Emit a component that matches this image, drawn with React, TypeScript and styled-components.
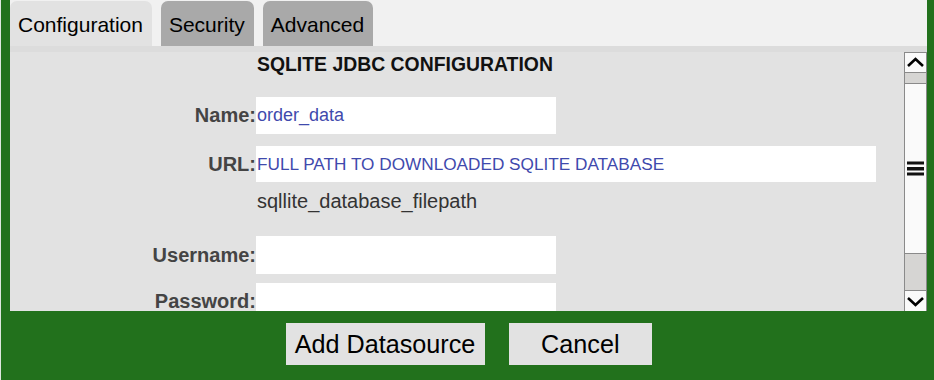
import React from 'react'
import styled, { createGlobalStyle } from 'styled-components'

const GlobalStyle = createGlobalStyle`
  html, body {
    margin: 0;
    padding: 0;
    background: #22711c;
  }
  body {
    font-family: "Liberation Sans", Arial, Helvetica, sans-serif;
  }
`

const tabs = ['Configuration', 'Security', 'Advanced']

function ChevronIcon({ down }: { down?: boolean }) {
  return (
    <svg width="19" height="11" viewBox="0 0 19 11">
      <polyline
        points={down ? '2,2 9.5,9 17,2' : '2,9 9.5,2 17,9'}
        fill="none"
        stroke="#000"
        strokeWidth="2.6"
      />
    </svg>
  )
}

function GripIcon() {
  return (
    <svg width="17" height="15" viewBox="0 0 17 15">
      <rect x="0" y="0.5" width="17" height="3" fill="#111" />
      <rect x="0" y="6" width="17" height="3.5" fill="#111" />
      <rect x="0" y="11.5" width="17" height="3" fill="#111" />
    </svg>
  )
}

export default function App() {
  return (
    <>
      <GlobalStyle />
      <Frame>
        <TabBar>
          {tabs.map((t, i) => (
            <Tab key={t} $active={i === 0}>
              {t}
            </Tab>
          ))}
        </TabBar>
        <Band />
        <Body>
          <Content>
            <Title>SQLITE JDBC CONFIGURATION</Title>
            <Row $h={37} $mt={22}>
              <Label>Name:</Label>
              <Field $w={300} readOnly defaultValue="order_data" />
            </Row>
            <Row $h={36} $mt={12}>
              <Label>URL:</Label>
              <Field
                $w={620}
                $size={17.2}
                readOnly
                defaultValue="FULL PATH TO DOWNLOADED SQLITE DATABASE"
              />
            </Row>
            <Row $h={23} $mt={8}>
              <span />
              <Hint>sqllite_database_filepath</Hint>
            </Row>
            <Row $h={38} $mt={23}>
              <Label>Username:</Label>
              <Field $w={300} readOnly defaultValue="" />
            </Row>
            <Row $h={37} $mt={9}>
              <Label>Password:</Label>
              <Field $w={300} type="password" readOnly defaultValue="" />
            </Row>
          </Content>
          <ScrollBar>
            <ArrowButton>
              <ChevronIcon />
            </ArrowButton>
            <Track>
              <Thumb>
                <GripIcon />
              </Thumb>
            </Track>
            <ArrowButton $bottom>
              <ChevronIcon down />
            </ArrowButton>
          </ScrollBar>
        </Body>
        <Footer>
          <Button>Add Datasource</Button>
          <Button>Cancel</Button>
        </Footer>
      </Frame>
    </>
  )
}

const Frame = styled.div`
  width: 934px;
  height: 380px;
  box-sizing: border-box;
  padding: 0 7px 0 10px;
  background: #22711c;
  border-left: 1px solid #dfe6de;
  display: flex;
  flex-direction: column;
  overflow: hidden;
`

const TabBar = styled.div`
  height: 46px;
  margin-left: -1px;
  background: #f1f1f1;
  display: flex;
  align-items: flex-end;
  gap: 9px;
  flex-shrink: 0;
`

const Tab = styled.div<{ $active?: boolean }>`
  height: 45px;
  box-sizing: border-box;
  padding: 2px 9px 0 8px;
  display: flex;
  align-items: center;
  font-size: 21px;
  color: #000;
  background: ${({ $active }) => ($active ? '#e2e2e2' : '#a9a9a9')};
  border-radius: 7px 7px 0 0;
`

const Band = styled.div`
  height: 6px;
  margin-left: -1px;
  background: #dcdcdc;
  flex-shrink: 0;
`

const Body = styled.div`
  height: 259px;
  margin-left: -1px;
  display: flex;
  flex-shrink: 0;
`

const Content = styled.div`
  flex: 1;
  background: #e2e2e2;
  overflow: hidden;
  display: flex;
  flex-direction: column;
`

const Title = styled.div`
  margin: 1px 0 0 247px;
  height: 22px;
  line-height: 22px;
  font-size: 19.4px;
  font-weight: bold;
  color: #111;
  flex-shrink: 0;
`

const Row = styled.div<{ $h: number; $mt: number }>`
  display: grid;
  grid-template-columns: 246px auto;
  align-items: center;
  height: ${({ $h }) => $h}px;
  margin-top: ${({ $mt }) => $mt}px;
  flex-shrink: 0;
`

const Label = styled.span`
  text-align: right;
  font-size: 20px;
  font-weight: bold;
  color: #444;
  line-height: 23px;
`

const Field = styled.input<{ $w: number; $size?: number }>`
  width: ${({ $w }) => $w}px;
  height: 100%;
  box-sizing: border-box;
  border: none;
  outline: none;
  margin: 0;
  padding: 0 1px;
  background: #fff;
  font-family: "Liberation Sans", Arial, Helvetica, sans-serif;
  font-size: ${({ $size }) => $size ?? 18}px;
  color: #3f4aad;
`

const Hint = styled.span`
  padding-left: 1px;
  font-size: 20px;
  line-height: 23px;
  color: #333;
`

const ScrollBar = styled.div`
  width: 23px;
  box-sizing: border-box;
  border-left: 1px solid #8a8a8a;
  border-right: 1px solid #8a8a8a;
  display: flex;
  flex-direction: column;
  background: #d6d5d3;
`

const ArrowButton = styled.div<{ $bottom?: boolean }>`
  height: 21px;
  box-sizing: border-box;
  background: #fafafa;
  border-top: 1px solid #8a8a8a;
  border-bottom: ${({ $bottom }) => ($bottom ? 'none' : '1px solid #8a8a8a')};
  display: flex;
  align-items: center;
  justify-content: center;
  flex-shrink: 0;
`

const Track = styled.div`
  flex: 1;
  padding: 10px 0 36px;
  display: flex;
`

const Thumb = styled.div`
  flex: 1;
  background: #fafafa;
  border-top: 1px solid #8a8a8a;
  border-bottom: 1px solid #8a8a8a;
  display: flex;
  align-items: center;
  justify-content: center;
`

const Footer = styled.div`
  flex: 1;
  padding-top: 12px;
  display: flex;
  justify-content: center;
  align-items: flex-start;
  gap: 24px;
`

const Button = styled.button`
  height: 42px;
  min-width: 143px;
  padding: 0 10px 0 9px;
  margin: 0;
  border: none;
  border-radius: 0;
  background: #e2e2e2;
  font-family: "Liberation Sans", Arial, Helvetica, sans-serif;
  font-size: 25.2px;
  color: #000;
`
